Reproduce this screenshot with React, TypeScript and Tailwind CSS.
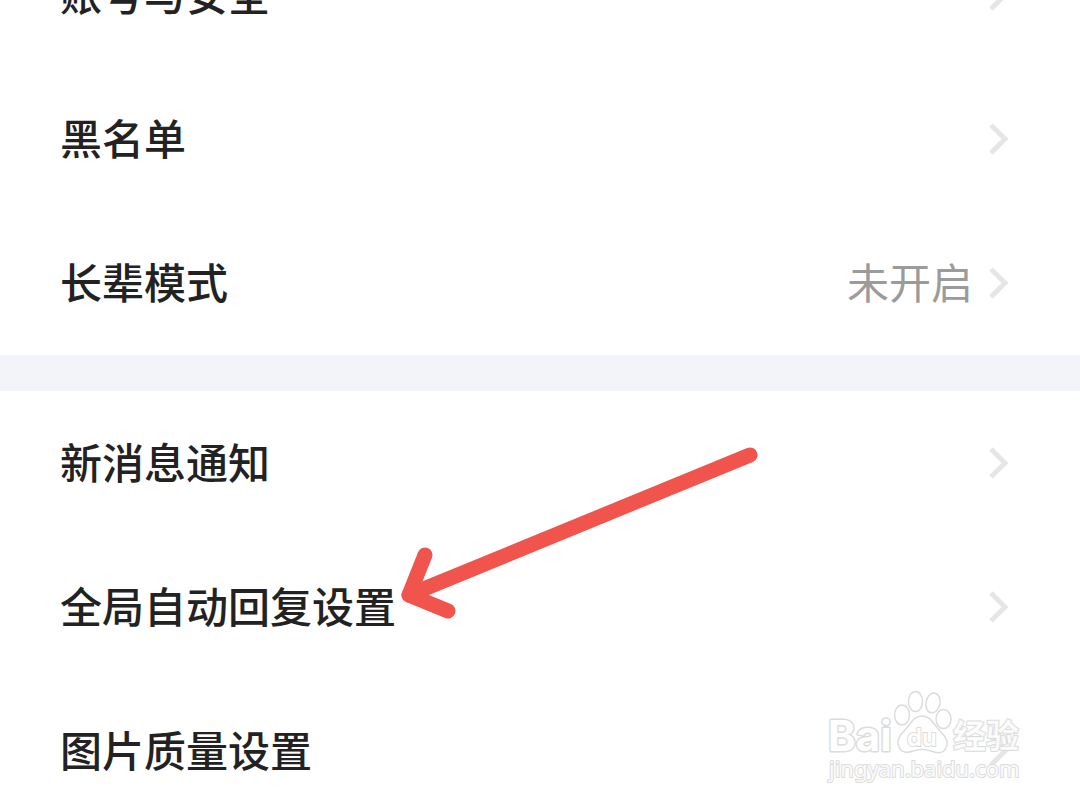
interface SettingItem {
  label: string;
  value?: string;
}

const accountItems: SettingItem[] = [{ label: "黑名单" }, { label: "长辈模式", value: "未开启" }];

const generalItems: SettingItem[] = [
  { label: "新消息通知" },
  { label: "全局自动回复设置" },
  { label: "图片质量设置" },
];

function Chevron() {
  return (
    <svg width="20" height="32" viewBox="0 0 20 32" fill="none" aria-hidden="true">
      <path d="M2 2 L16 16 L2 30" stroke="#e6e6e6" strokeWidth="5" />
    </svg>
  );
}

function SettingRow({ label, value }: SettingItem) {
  return (
    <button
      type="button"
      className="flex h-36 w-full shrink-0 items-center justify-between pr-[71px] pl-15 text-left text-[42px] leading-[60px]"
    >
      <span className="pb-1 font-medium text-[#222222]">{label}</span>
      <span className="flex items-center gap-4">
        {value && <span className="pb-1 text-[#9b9b9b]">{value}</span>}
        <Chevron />
      </span>
    </button>
  );
}

// Red hand-drawn pointer towards the auto reply row
function Arrow() {
  return (
    <svg
      className="pointer-events-none absolute top-12 left-[392px]"
      width="376"
      height="188"
      viewBox="0 0 376 188"
      fill="none"
      stroke="#f0544c"
      strokeWidth="15"
      strokeLinecap="round"
      strokeLinejoin="round"
      aria-hidden="true"
    >
      <path d="M358 16 L17 156" />
      <path d="M33 116 L17 156 L56 172" />
    </svg>
  );
}

function Watermark() {
  return (
    <svg
      className="pointer-events-none absolute right-14 bottom-5"
      width="200"
      height="98"
      viewBox="0 0 200 98"
      fill="#ffffff"
      stroke="#dcdcdc"
      strokeWidth="1.5"
      strokeLinejoin="round"
    >
      <text
        x="4"
        y="62"
        fontSize="42"
        fontWeight="700"
        fontFamily="Inter, 'Liberation Sans', sans-serif"
        strokeWidth="3"
        paintOrder="stroke"
      >
        Bai
      </text>
      <ellipse cx="78" cy="26" rx="7.5" ry="10" />
      <ellipse cx="91.5" cy="12.5" rx="7" ry="10" />
      <ellipse cx="109" cy="14" rx="7" ry="10" transform="rotate(12 109 14)" />
      <ellipse cx="119.5" cy="30" rx="7.5" ry="9.5" />
      <path d="M98 27 C107 27 110 36 116 42 C122 48 125 53 122 59 C119 65 112 64 107 62 C101 60 95 60 89 62 C84 64 77 64 75 58 C72 51 76 46 81 41 C87 35 89 27 98 27 Z" />
      <text
        x="83"
        y="57"
        fontSize="24"
        fontWeight="600"
        fontFamily="Inter, 'Liberation Sans', sans-serif"
        strokeWidth="2"
        paintOrder="stroke"
      >
        du
      </text>
      <text
        x="129"
        y="59"
        fontSize="33"
        fontWeight="700"
        fontFamily="'Noto Sans CJK SC', sans-serif"
        strokeWidth="2"
        paintOrder="stroke"
        fillOpacity="0.8"
      >
        经验
      </text>
      <text
        x="5"
        y="88"
        fontSize="22"
        fontWeight="400"
        fontFamily="'Noto Sans', sans-serif"
        strokeWidth="2"
        paintOrder="stroke"
        fillOpacity="0.9"
      >
        jingyan.baidu.com
      </text>
    </svg>
  );
}

export default function App() {
  return (
    <main className="relative h-screen overflow-hidden bg-white font-['Noto_Sans_CJK_SC',sans-serif]">
      <section>
        {/* the top row is scrolled halfway out of view */}
        <div className="flex h-[67px] items-end overflow-hidden">
          <SettingRow label="账号与安全" />
        </div>
        {accountItems.map((item) => (
          <SettingRow key={item.label} {...item} />
        ))}
      </section>
      <div className="h-9 bg-[#f2f4f9]" />
      <section className="relative">
        {generalItems.map((item) => (
          <SettingRow key={item.label} {...item} />
        ))}
        <Arrow />
      </section>
      <Watermark />
    </main>
  );
}
